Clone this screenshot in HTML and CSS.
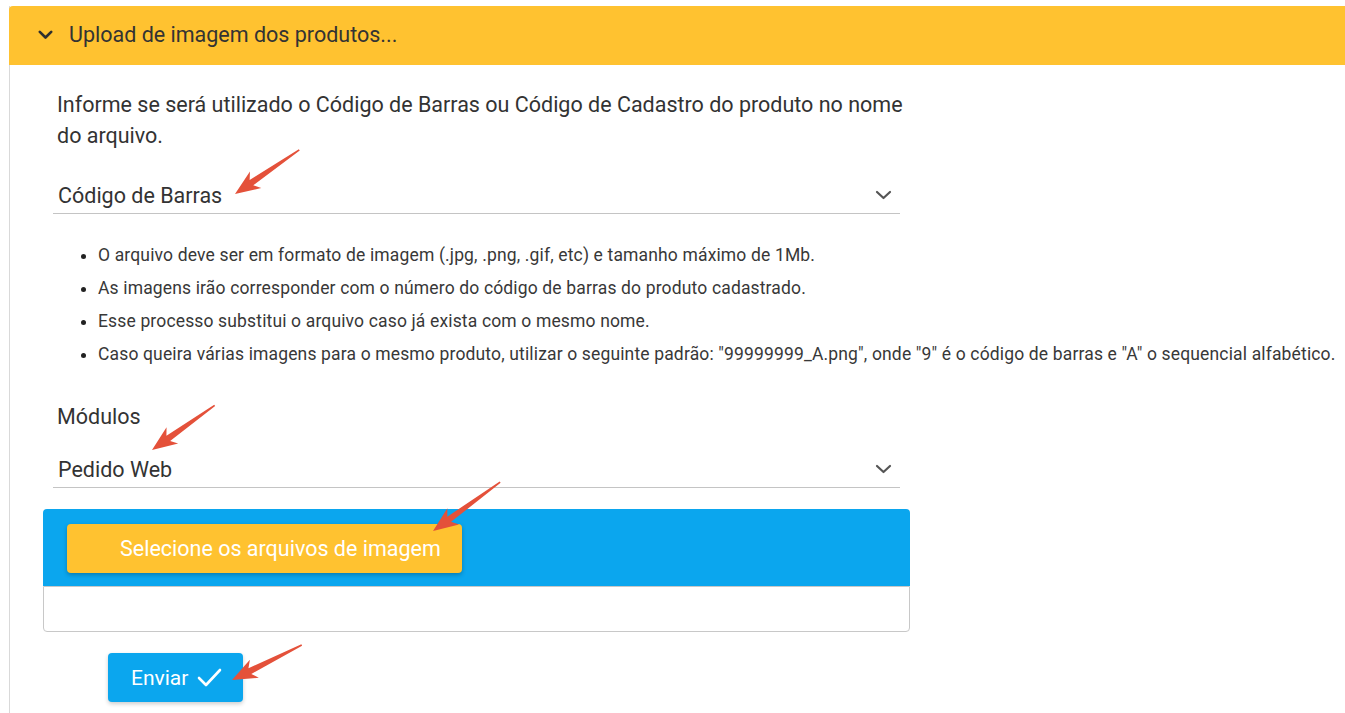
FILE: index.html
```html
<!DOCTYPE html>
<html lang="pt-BR">
<head>
<meta charset="utf-8">
<title>Upload de imagem dos produtos</title>
<link rel="stylesheet" href="styles.css">
</head>
<body>
<div class="panel">
  <div class="panel-header">
    <svg class="header-chevron" width="15" height="10" viewBox="0 0 15 10"><path d="M1.8 1.8 L7.5 7.5 L13.2 1.8" fill="none" stroke="#2f2f2f" stroke-width="2.6" stroke-linecap="round" stroke-linejoin="round"/></svg>
    <span class="header-title">Upload de imagem dos produtos...</span>
  </div>
  <div class="panel-body">
    <p class="intro">Informe se será utilizado o Código de Barras ou Código de Cadastro do produto no nome do arquivo.</p>
    <div class="select select-first">
      <span>Código de Barras</span>
      <svg class="select-chevron" width="17" height="10" viewBox="0 0 17 10"><path d="M2 2 L8.5 8 L15 2" fill="none" stroke="#555" stroke-width="2.2" stroke-linecap="round" stroke-linejoin="round"/></svg>
    </div>
    <ul class="rules">
      <li>O arquivo deve ser em formato de imagem (.jpg, .png, .gif, etc) e tamanho máximo de 1Mb.</li>
      <li>As imagens irão corresponder com o número do código de barras do produto cadastrado.</li>
      <li>Esse processo substitui o arquivo caso já exista com o mesmo nome.</li>
      <li>Caso queira várias imagens para o mesmo produto, utilizar o seguinte padrão: "99999999_A.png", onde "9" é o código de barras e "A" o sequencial alfabético.</li>
    </ul>
    <label class="field-label">Módulos</label>
    <div class="select select-second">
      <span>Pedido Web</span>
      <svg class="select-chevron" width="17" height="10" viewBox="0 0 17 10"><path d="M2 2 L8.5 8 L15 2" fill="none" stroke="#555" stroke-width="2.2" stroke-linecap="round" stroke-linejoin="round"/></svg>
    </div>
    <div class="uploader">
      <div class="uploader-bar">
        <button class="btn-select">Selecione os arquivos de imagem</button>
      </div>
      <div class="uploader-list"></div>
    </div>
    <button class="btn-send">Enviar <svg class="check" width="25" height="19" viewBox="0 0 25 19"><path d="M2 10 L9 17 L23 2" fill="none" stroke="#fff" stroke-width="2.6" stroke-linecap="round" stroke-linejoin="round"/></svg></button>
  </div>
</div>
<svg class="annotations" width="1345" height="713" viewBox="0 0 1345 713">
  <g fill="#e4513a">
    <path transform="translate(235,194) rotate(-34.5)" d="M0 0 L25 -10 L20 -3.2 L78 -0.8 L78 0.8 L20 3.2 L25 10 Z"/>
    <path transform="translate(152,450) rotate(-35.5)" d="M0 0 L25 -10 L20 -3.2 L77 -0.8 L77 0.8 L20 3.2 L25 10 Z"/>
    <path transform="translate(433,531) rotate(-36)" d="M0 0 L25 -10 L20 -3.2 L83 -0.8 L83 0.8 L20 3.2 L25 10 Z"/>
    <path transform="translate(232,680) rotate(-26.6)" d="M0 0 L25 -10 L20 -3.2 L78 -0.8 L78 0.8 L20 3.2 L25 10 Z"/>
  </g>
</svg>
</body>
</html>
```
FILE: styles.css
```css
html, body {
  margin: 0;
  padding: 0;
  background: #fff;
  overflow: hidden;
}
body {
  font-family: Roboto, "Liberation Sans", Arial, sans-serif;
  color: #333;
  width: 1345px;
  height: 713px;
  position: relative;
}
.panel {
  margin: 6px 0 0 9px;
  border-left: 1px solid #d9d9d9;
  min-height: 707px;
}
.panel-header {
  height: 59px;
  margin-left: -1px;
  background: #ffc230;
  border-top-left-radius: 4px;
  display: flex;
  align-items: center;
  padding-left: 29px;
}
.header-chevron {
  display: block;
  margin-top: -2px;
}
.header-title {
  font-size: 21.5px;
  color: #333;
  margin-left: 16px;
  margin-top: -2px;
}
.panel-body {
  padding: 24px 0 0 47px;
}
.intro {
  margin: 0 0 27px;
  font-size: 21.5px;
  line-height: 31px;
  width: 860px;
}
.select {
  width: 834px;
  margin-left: -4px;
  padding: 6px 8px 5px 5px;
  line-height: 24px;
  font-size: 21.5px;
  border-bottom: 1px solid #c4c4c4;
  display: flex;
  justify-content: space-between;
  align-items: center;
}
.select-chevron {
  display: block;
  margin-top: -2px;
}
.rules {
  margin: 25px 0 0;
  padding-left: 41px;
  font-size: 17.5px;
  letter-spacing: 0.15px;
  line-height: 33px;
  color: #383838;
  list-style: disc;
}
.rules li {
  height: 33px;
}
.rules li::marker {
  color: #222;
}
.field-label {
  display: block;
  margin-top: 34px;
  font-size: 21.5px;
  line-height: 24px;
}
.select-second {
  margin-top: 23px;
}
.uploader {
  margin: 21px 0 0 -14px;
  width: 867px;
}
.uploader-bar {
  background: #0ba6ee;
  border-radius: 4px 4px 0 0;
  padding: 15px 0 13px 24px;
}
.btn-select {
  display: block;
  height: 49px;
  width: 395px;
  border: none;
  border-radius: 4px;
  background: #ffc230;
  color: #fff;
  font-family: inherit;
  font-size: 21.5px;
  text-align: left;
  padding: 0 0 0 53px;
  box-shadow: 0 2px 4px rgba(0, 0, 0, 0.25);
}
.uploader-list {
  height: 44px;
  border: 1px solid #c8c8c8;
  border-radius: 0 0 4px 4px;
}
.btn-send {
  margin: 21px 0 0 51px;
  height: 49px;
  width: 135px;
  border: none;
  border-radius: 4px;
  background: #0ba6ee;
  color: #fff;
  font-family: inherit;
  font-size: 21px;
  display: flex;
  align-items: center;
  padding: 0 0 0 23px;
  box-shadow: 0 2px 4px rgba(0, 0, 0, 0.2);
}
.check {
  display: block;
  margin-left: 9px;
}
.annotations {
  position: absolute;
  top: 0;
  left: 0;
  pointer-events: none;
}
```
